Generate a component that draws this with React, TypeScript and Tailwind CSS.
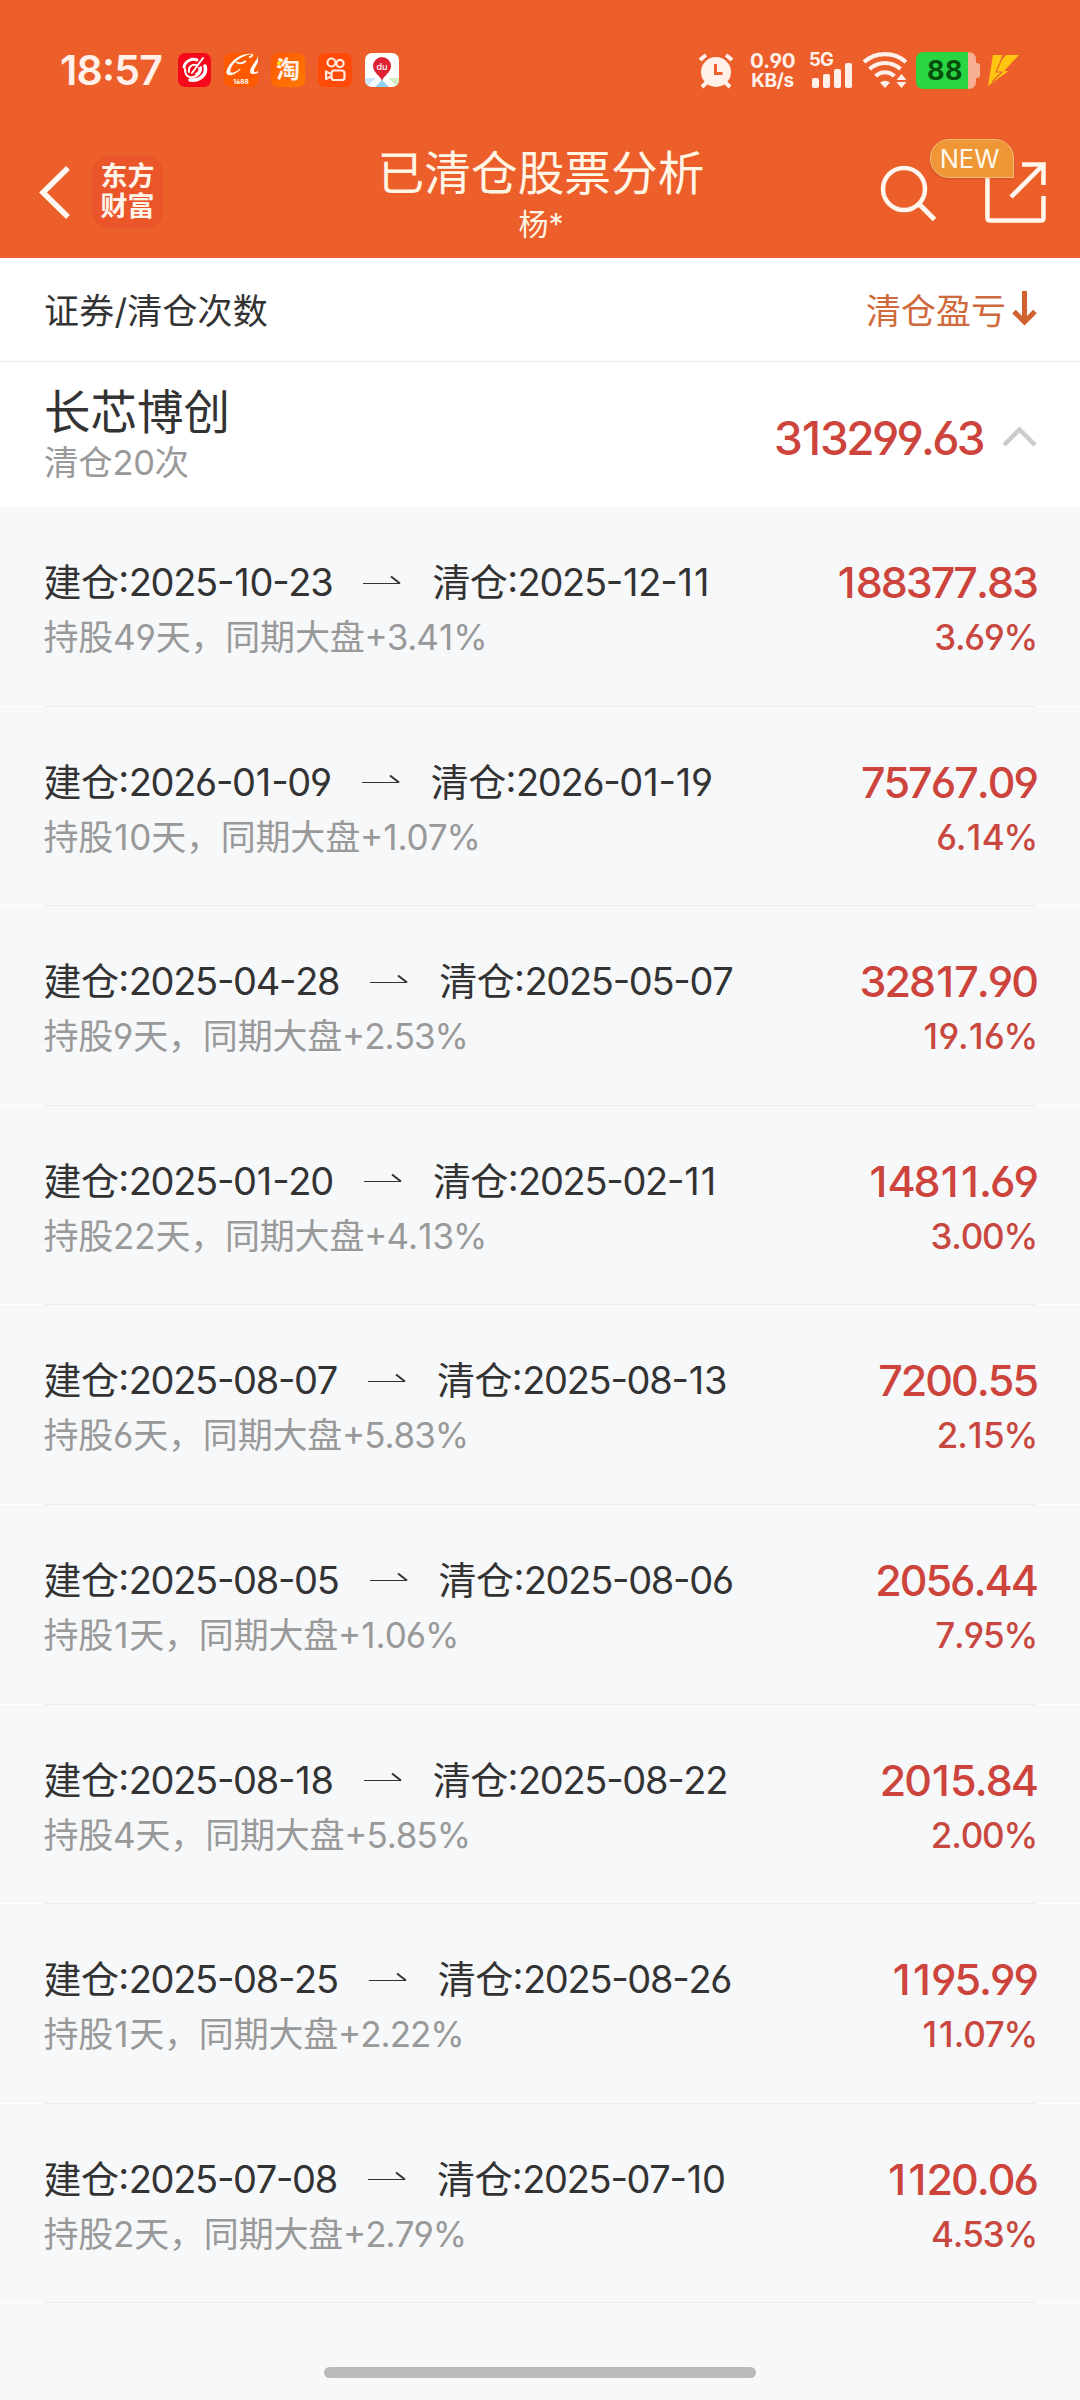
const font = "font-[Inter,'Noto_Sans_CJK_SC',sans-serif]";

const trades = [
  { open: "2025-10-23", close: "2025-12-11", days: 49, index: "+3.41%", profit: "188377.83", rate: "3.69%" },
  { open: "2026-01-09", close: "2026-01-19", days: 10, index: "+1.07%", profit: "75767.09", rate: "6.14%" },
  { open: "2025-04-28", close: "2025-05-07", days: 9, index: "+2.53%", profit: "32817.90", rate: "19.16%" },
  { open: "2025-01-20", close: "2025-02-11", days: 22, index: "+4.13%", profit: "14811.69", rate: "3.00%" },
  { open: "2025-08-07", close: "2025-08-13", days: 6, index: "+5.83%", profit: "7200.55", rate: "2.15%" },
  { open: "2025-08-05", close: "2025-08-06", days: 1, index: "+1.06%", profit: "2056.44", rate: "7.95%" },
  { open: "2025-08-18", close: "2025-08-22", days: 4, index: "+5.85%", profit: "2015.84", rate: "2.00%" },
  { open: "2025-08-25", close: "2025-08-26", days: 1, index: "+2.22%", profit: "1195.99", rate: "11.07%" },
  { open: "2025-07-08", close: "2025-07-10", days: 2, index: "+2.79%", profit: "1120.06", rate: "4.53%" },
];

// Gives the narrow "1" some air on both sides
function Num({ value, one = "mx-[0.03em]" }: { value: string | number; one?: string }) {
  return (
    <>
      {String(value)
        .split(/(1)/)
        .filter(Boolean)
        .map((part, i) =>
          part === "1" ? (
            <span key={i} className={one}>
              1
            </span>
          ) : (
            part
          ),
        )}
    </>
  );
}

function AppIcons() {
  return (
    <div className="flex items-center gap-[13px]">
      <svg width="33" height="34" viewBox="0 0 33 34">
        <rect width="33" height="34" rx="7" fill="#f4081a" />
        <g fill="none" stroke="#fff" strokeLinecap="round">
          <path d="M6 14C7 8 14 5 19 7" strokeWidth="3" />
          <path d="M27 13c2 7-3 15-15 14" strokeWidth="3.6" />
          <path d="M7 16c0 7 4 9 8 8 6-1 9-6 8-10" strokeWidth="2" />
          <path d="M25 5L14 20M11 19c-1-5 3-8 7-7M18 21c3-1 4-4 3-6" strokeWidth="2" />
        </g>
      </svg>
      <svg width="34" height="34" viewBox="0 0 34 34">
        <rect width="34" height="34" rx="7" fill="#ff5a00" />
        <path d="M28 1C17-1 5 9 2.500 18c-1 6 6 5 11 1 2-1 3-3 3-4-3 3-8 6-10 4C5 14 14 3 28 1z" fill="#fff" />
        <path d="M28 1c1 2-1 3-3 3M12 9c3 2 6 2 10-1" fill="none" stroke="#fff" strokeWidth="1.800" />
        <path d="M34 3c-2 6-8 11-8 16 1 3 5 2 8 1v-2c-2 1-4 2-4 0 0-3 3-6 4-9z" fill="#fff" />
        <text x="17" y="30.500" textAnchor="middle" fontSize="6.500" fontWeight="700" fill="#fff" fontFamily="Inter">
          1688
        </text>
      </svg>
      <div className="relative grid size-[34px] place-items-center rounded-[7px] bg-gradient-to-br from-[#ff5500] to-[#ff7a00] text-[24px] font-bold leading-none text-[#fff0e8]">
        淘
        <span className="absolute left-[6px] top-[8px] size-1 rounded-full bg-[#ffe000]" />
      </div>
      <svg width="34" height="34" viewBox="0 0 34 34" fill="none" stroke="#ffe9df" strokeWidth="2.200">
        <rect width="34" height="34" rx="7" fill="#ff4a08" stroke="none" />
        <circle cx="13.500" cy="9.500" r="4" />
        <circle cx="22" cy="10.500" r="3.600" />
        <rect x="13.500" y="17.500" width="13" height="9.500" rx="2.800" />
        <path d="M13 21l-5-2.500v7.500l5-2.500" strokeLinejoin="round" />
      </svg>
      <svg width="34" height="34" viewBox="0 0 34 34">
        <clipPath id="map">
          <rect width="34" height="34" rx="7" />
        </clipPath>
        <g clipPath="url(#map)">
          <rect width="34" height="34" fill="#fff" />
          <path d="M0 25h11l-9 9H0z" fill="#c9e9fb" />
          <path d="M34 25H23l9 9h2z" fill="#d5efc4" />
          <path d="M10 34l7-7 7 7z" fill="#8fd3f7" />
          <path d="M17 28c-1-5-9-8-9-15a9 9 0 0118 0c0 7-8 10-9 15z" fill="#df2233" />
        </g>
        <text x="17" y="16.500" textAnchor="middle" fontSize="9" fontWeight="500" fill="#fff" fontFamily="Inter">
          du
        </text>
      </svg>
    </div>
  );
}

function StatusBar() {
  return (
    <div className="flex h-[140px] items-center justify-between pl-[60px] pr-[61px] text-[#fff0ea]">
      <div className="flex items-center">
        <span className="w-[118px] text-[41px] font-semibold leading-none tracking-[-0.800px]">18:57</span>
        <AppIcons />
      </div>
      <div className="flex items-center">
        <svg width="36" height="37" viewBox="0 0 36 37">
          <circle cx="18" cy="20" r="15" fill="#fff0ea" />
          <path d="M2 8l6-5M34 8l-6-5M4 35l5-5M32 35l-5-5" stroke="#fff0ea" strokeWidth="4" />
          <path d="M17.500 12v9.500h7" stroke="#eb5f2b" strokeWidth="3" fill="none" />
        </svg>
        <div className="ml-[15px] w-[47px] pt-px text-center text-[20.500px] font-bold leading-[20px] tracking-[-0.500px]">
          <div>0.90</div>
          <div className="text-[19px] tracking-[-0.500px]">KB/s</div>
        </div>
        <div className="ml-[13px] flex h-[38px] w-[45px] flex-col justify-between">
          <span className="h-0 text-[18.500px] font-bold leading-[16px] tracking-[-0.800px]">5G</span>
          <svg width="45" height="26" viewBox="0 0 45 26" fill="#fff0ea">
            <rect x="3" y="15" width="7" height="10" rx="2" />
            <rect x="14" y="11" width="7" height="14" rx="2" />
            <rect x="25" y="6" width="7" height="19" rx="2" />
            <rect x="36" y="0" width="7" height="25" rx="2" />
          </svg>
        </div>
        <svg className="ml-[8px]" width="46" height="38" viewBox="0 0 46 38" fill="none" stroke="#fff0ea" strokeWidth="4.200">
          <path d="M2 11C14 .5 32 .5 44 11" />
          <path d="M7.500 18C17 10 29 10 38.500 18" />
          <path d="M13.500 25C19.500 20 26.500 20 32.500 25" />
          <path d="M18 31.500q5-3.500 10 0L23 37z" fill="#fff0ea" stroke="none" />
          <path d="M39.500 23l5 6h-10zM39.500 37l5-6h-10z" fill="#fff0ea" stroke="none" />
        </svg>
        <svg className="ml-[8px]" width="64" height="37" viewBox="0 0 64 37">
          <path d="M8 0h44q8 0 8 8v3h1q3 0 3 3v9q0 3-3 3h-1v3q0 8-8 8H8z" fill="#f8ae93" />
          <path d="M8 0h44v37H8q-8 0-8-8V8q0-8 8-8z" fill="#2ad544" />
          <text x="29" y="27.500" textAnchor="middle" fontSize="27" fontWeight="700" fill="#06500c" fontFamily="Inter" letterSpacing="0.500">
            88
          </text>
        </svg>
        <svg className="ml-[8px]" width="31" height="31" viewBox="0 0 31 31">
          <path d="M5 0h9l-3.500 14H16l-2 2.500L0 31z" fill="#ffc510" />
          <path d="M18 0h13L16 16h4.500L0 31l7-13H2z" fill="#ffc510" />
          <path d="M15.500 0L8 17h6L4 27" stroke="#eb5f2b" strokeWidth="1.200" fill="none" />
        </svg>
      </div>
    </div>
  );
}

function TitleBar() {
  return (
    <div className="flex h-[118px] items-start justify-between pl-[39px] pr-[34px] text-white">
      <div className="flex w-[330px] items-center pt-[16px]">
        <svg width="31" height="53" viewBox="0 0 31 53" fill="none" stroke="#fff8f2" strokeWidth="5.500">
          <path d="M29 2L4 26.500 29 51" />
        </svg>
        <div className="ml-[22px] grid h-[72px] w-[71px] place-content-center rounded-[15px] bg-[#ea562a] text-center text-[27px] font-bold leading-[30px] text-[#fff4ea]">
          <div>东方</div>
          <div>财富</div>
        </div>
      </div>
      <div className="flex flex-col items-center pr-[3px] pt-[7px] text-[#fff6e6]">
        <h1 className="text-[46.700px] leading-[52px]">已清仓股票分析</h1>
        <div className="mt-[3px] text-[30px] leading-[44px] [font-feature-settings:normal]">杨*</div>
      </div>
      <div className="relative flex w-[330px] items-start justify-end pt-[22px]">
        <svg className="mt-[3px]" width="57" height="57" viewBox="0 0 57 57" fill="none" stroke="#fff6ee" strokeWidth="4.500">
          <circle cx="24" cy="24" r="21" />
          <path d="M39 39l15.500 15.500" strokeWidth="5" />
        </svg>
        <svg className="ml-[48px]" width="61" height="61" viewBox="0 0 61 61" fill="none" stroke="#fff6ee" strokeWidth="4.500">
          <path d="M2.500 10v46q0 2.500 2.500 2.500h51q2.500 0 2.500-2.500V34M37 2.500h21.500V23M58 3L26 35" />
        </svg>
        <div className="absolute right-[32px] top-[-1px] h-[39px] w-[84px] rounded-[19px] rounded-br-none border border-[#f7bb76] bg-[#ef9637] pr-[5px] text-center text-[25.500px] leading-[38px] text-[#fff8ec] shadow-sm">
          NEW
        </div>
      </div>
    </div>
  );
}

function TradeRow({ trade }: { trade: (typeof trades)[number] }) {
  return (
    <li className="bg-white">
      <div className="h-[198.600px] bg-[#f7f8fa] pl-[43.500px] pr-[43px] pt-[50px]">
        <div className="flex items-center justify-between">
          <div className="flex items-center text-[38px] leading-[50px] text-[#333]">
            <span className="tracking-[-0.600px]">建仓:</span>
            <span className="tracking-[-1.300px]">
              <Num value={trade.open} />
            </span>
            <svg className="mb-[5px] ml-[31px] mr-[31px]" width="38" height="10" viewBox="0 0 38 10" fill="none" stroke="#333">
              <path d="M0 8.500h37" strokeWidth="1" />
              <path d="M28 1.500l9 7" strokeWidth="2" />
            </svg>
            <span className="tracking-[-0.600px]">清仓:</span>
            <span className="tracking-[-1.300px]">
              <Num value={trade.close} />
            </span>
          </div>
          <span className="text-[43px] font-medium leading-[50px] tracking-[-2px] text-[#cc443c]">
            <Num value={trade.profit} one="mx-[0.05em]" />
          </span>
        </div>
        <div className="mt-[4px] flex items-center justify-between text-[35px] leading-[52px] tracking-[-1px]">
          <span className="text-[#999]">
            <span className="tracking-[-0.200px]">
              持股
              <Num value={trade.days} />
              天，同期大盘
            </span>
            <Num value={trade.index} />
          </span>
          <span className="font-medium tracking-[-1.200px] text-[#c84840]">
            <Num value={trade.rate} one="mx-[0.045em]" />
          </span>
        </div>
      </div>
      <div className="mx-[43px] h-px bg-[#ebecee]" />
    </li>
  );
}

export default function App() {
  return (
    <div
      className={`${font} flex h-[2400px] w-[1080px] flex-col overflow-hidden bg-[#f7f8fa] [font-feature-settings:'case','cv03','cv04'] [font-kerning:none]`}
    >
      <header className="h-[258px] shrink-0 bg-[#ec5f2b]">
        <StatusBar />
        <TitleBar />
      </header>

      <div className="flex h-[104px] shrink-0 items-center justify-between border-b border-[#ebebeb] bg-white pl-[44px] pr-[42px] pt-[4px] text-[35px] text-[#333]">
        <span className="tracking-[0.200px]">证券/清仓次数</span>
        <div className="flex items-center text-[#cf6a3c]">
          清仓盈亏
          <svg className="mb-[6px] ml-[6px]" width="26" height="36" viewBox="0 0 26 36" fill="none" stroke="#cf622f" strokeWidth="5">
            <path d="M12.500 0v32M2 20.500L12.500 31 23 20.500" />
          </svg>
        </div>
      </div>

      <div className="flex h-[145px] shrink-0 items-center justify-between bg-white pl-[44px] pr-[43px] pt-[4px]">
        <div>
          <div className="text-[46.500px] leading-[53px] text-[#333]">长芯博创</div>
          <div className="text-[34.500px] leading-[48px] tracking-[-0.300px] text-[#999]">清仓20次</div>
        </div>
        <div className="flex items-center">
          <span className="pt-[4px] text-[46px] font-medium tracking-[-2.700px] text-[#cc443c]">
            <Num value="313299.63" one="mx-[0.04em]" />
          </span>
          <svg className="ml-[19px]" width="35" height="21" viewBox="0 0 35 21" fill="none" stroke="#ccc" strokeWidth="4.500">
            <path d="M2 19L17.500 3.500 33 19" />
          </svg>
        </div>
      </div>

      <ul className="flex-1">
        {trades.map((trade) => (
          <TradeRow key={trade.open} trade={trade} />
        ))}
      </ul>

      <div className="mx-auto mb-[22px] h-[11px] w-[432px] shrink-0 rounded-full bg-[#b9babc]" />
    </div>
  );
}
